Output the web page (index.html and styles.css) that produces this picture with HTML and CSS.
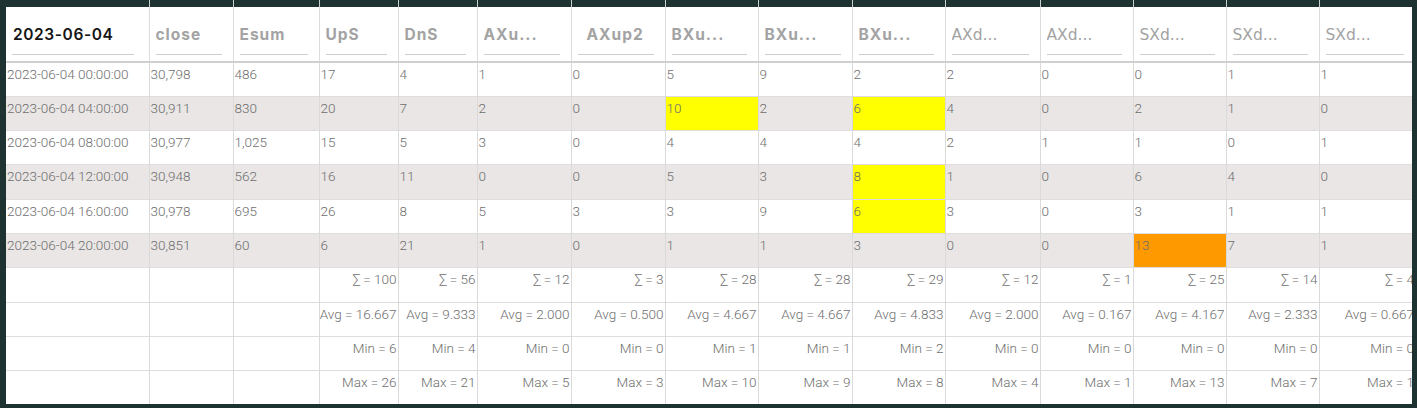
FILE: index.html
```html
<!DOCTYPE html>
<html>
<head>
<meta charset="utf-8">
<link rel="stylesheet" href="styles.css">
</head>
<body>
<div class="frame">
<table class="grid">
<colgroup>
<col class="w143"><col class="w84"><col class="w86"><col class="w79"><col class="w79">
<col class="w94"><col class="w94"><col class="w93"><col class="w94"><col class="w93">
<col class="w95"><col class="w93"><col class="w93"><col class="w93"><col class="w96">
</colgroup>
<thead>
<tr class="strip"><td></td><td></td><td></td><td></td><td></td><td></td><td></td><td></td><td></td><td></td><td></td><td></td><td></td><td></td><td></td></tr>
<tr class="head">
<th><div class="hdr date">2023-06-04</div></th>
<th><div class="hdr">close</div></th>
<th><div class="hdr">Esum</div></th>
<th><div class="hdr">UpS</div></th>
<th><div class="hdr">DnS</div></th>
<th><div class="hdr">AXu...</div></th>
<th><div class="hdr pad">AXup2</div></th>
<th><div class="hdr">BXu...</div></th>
<th><div class="hdr">BXu...</div></th>
<th><div class="hdr">BXu...</div></th>
<th><div class="hdr thin">AXd...</div></th>
<th><div class="hdr thin">AXd...</div></th>
<th><div class="hdr thin">SXd...</div></th>
<th><div class="hdr thin">SXd...</div></th>
<th><div class="hdr thin">SXd...</div></th>
</tr>
</thead>
<tbody>
<tr class="row"><td>2023-06-04 00:00:00</td><td>30,798</td><td>486</td><td>17</td><td>4</td><td>1</td><td>0</td><td>5</td><td>9</td><td>2</td><td>2</td><td>0</td><td>0</td><td>1</td><td>1</td></tr>
<tr class="row alt"><td>2023-06-04 04:00:00</td><td>30,911</td><td>830</td><td>20</td><td>7</td><td>2</td><td>0</td><td class="hi">10</td><td>2</td><td class="hi">6</td><td>4</td><td>0</td><td>2</td><td>1</td><td>0</td></tr>
<tr class="row"><td>2023-06-04 08:00:00</td><td>30,977</td><td>1,025</td><td>15</td><td>5</td><td>3</td><td>0</td><td>4</td><td>4</td><td>4</td><td>2</td><td>1</td><td>1</td><td>0</td><td>1</td></tr>
<tr class="row alt"><td>2023-06-04 12:00:00</td><td>30,948</td><td>562</td><td>16</td><td>11</td><td>0</td><td>0</td><td>5</td><td>3</td><td class="hi">8</td><td>1</td><td>0</td><td>6</td><td>4</td><td>0</td></tr>
<tr class="row"><td>2023-06-04 16:00:00</td><td>30,978</td><td>695</td><td>26</td><td>8</td><td>5</td><td>3</td><td>3</td><td>9</td><td class="hi">6</td><td>3</td><td>0</td><td>3</td><td>1</td><td>1</td></tr>
<tr class="row alt"><td>2023-06-04 20:00:00</td><td>30,851</td><td>60</td><td>6</td><td>21</td><td>1</td><td>0</td><td>1</td><td>1</td><td>3</td><td>0</td><td>0</td><td class="warn">13</td><td>7</td><td>1</td></tr>
</tbody>
<tfoot>
<tr class="foot"><td></td><td></td><td></td><td>∑ = 100</td><td>∑ = 56</td><td>∑ = 12</td><td>∑ = 3</td><td>∑ = 28</td><td>∑ = 28</td><td>∑ = 29</td><td>∑ = 12</td><td>∑ = 1</td><td>∑ = 25</td><td>∑ = 14</td><td>∑ = 4</td></tr>
<tr class="foot"><td></td><td></td><td></td><td>Avg = 16.667</td><td>Avg = 9.333</td><td>Avg = 2.000</td><td>Avg = 0.500</td><td>Avg = 4.667</td><td>Avg = 4.667</td><td>Avg = 4.833</td><td>Avg = 2.000</td><td>Avg = 0.167</td><td>Avg = 4.167</td><td>Avg = 2.333</td><td>Avg = 0.667</td></tr>
<tr class="foot"><td></td><td></td><td></td><td>Min = 6</td><td>Min = 4</td><td>Min = 0</td><td>Min = 0</td><td>Min = 1</td><td>Min = 1</td><td>Min = 2</td><td>Min = 0</td><td>Min = 0</td><td>Min = 0</td><td>Min = 0</td><td>Min = 0</td></tr>
<tr class="foot"><td></td><td></td><td></td><td>Max = 26</td><td>Max = 21</td><td>Max = 5</td><td>Max = 3</td><td>Max = 10</td><td>Max = 9</td><td>Max = 8</td><td>Max = 4</td><td>Max = 1</td><td>Max = 13</td><td>Max = 7</td><td>Max = 1</td></tr>
</tfoot>
</table>
</div>
</body>
</html>
```

FILE: styles.css
```css
html, body {
  margin: 0;
  padding: 0;
  background: #1f3232;
}

.frame {
  margin-left: 6px;
  width: 1406px;
  height: 404px;
  overflow: hidden;
  background: #ffffff;
}

.grid {
  border-collapse: collapse;
  table-layout: fixed;
  width: 1409px;
  font-family: Roboto, "Liberation Sans", sans-serif;
  font-weight: 300;
  font-size: 13.5px;
  color: #6e6e6e;
}

.w143 { width: 143px; }
.w84 { width: 84px; }
.w86 { width: 86px; }
.w79 { width: 79px; }
.w93 { width: 93px; }
.w94 { width: 94px; }
.w95 { width: 95px; }
.w96 { width: 96px; }

.strip td {
  height: 7px;
  padding: 0;
  background: #1f3232;
  border-left: 1px solid #c9cfcf;
}
.strip td:first-child { border-left: none; }

.head th {
  height: 54px;
  padding: 0;
  vertical-align: bottom;
  text-align: left;
  background: #fff;
  border-left: 1px solid #dcdcdc;
  border-bottom: 2px solid #cfcfcf;
}
.head th:first-child { border-left: none; }

.hdr {
  margin: 0 11px 6px 6px;
  padding-bottom: 9px;
  border-bottom: 1px solid #cdcdcd;
  line-height: 20px;
  font-family: Inter, "DejaVu Sans", sans-serif;
  font-weight: 700;
  font-size: 15.5px;
  letter-spacing: 1px;
  color: #a3a3a3;
  white-space: nowrap;
  overflow: hidden;
}
.hdr.date {
  color: #151515;
  font-weight: 600;
  font-size: 15.5px;
  letter-spacing: 0.6px;
  margin-right: 15px;
  padding-left: 1px;
}
.hdr.pad { padding-left: 9px; }
.hdr.thin {
  font-family: "DejaVu Sans", sans-serif;
  font-weight: 400;
  font-size: 15.5px;
  letter-spacing: 0;
}

.row td {
  height: 34.3px;
  padding: 3px 0 0 1px;
  vertical-align: top;
  line-height: 16px;
  white-space: nowrap;
  overflow: hidden;
  border-left: 1px solid #dadada;
  border-top: 1px solid #dedede;
  box-sizing: border-box;
}
.row td:first-child { border-left: none; }
.row.alt td { background: #e9e6e5; }
.row td.hi { background: #ffff00; }
.row td.warn { background: #ff9900; }

.foot td {
  height: 34.3px;
  padding: 3px 1px 0 0;
  vertical-align: top;
  text-align: right;
  line-height: 16px;
  white-space: nowrap;
  overflow: hidden;
  border-left: 1px solid #dadada;
  border-top: 1px solid #dedede;
  box-sizing: border-box;
}
.foot td:first-child { border-left: none; }
```
